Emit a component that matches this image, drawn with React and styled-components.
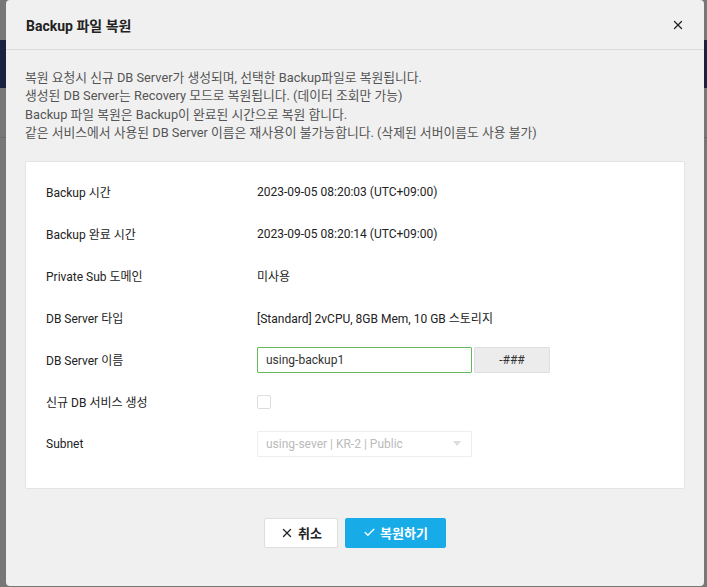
import styled, { createGlobalStyle } from 'styled-components';
import { X, Check } from 'lucide-react';

const GlobalStyle = createGlobalStyle`
  * { box-sizing: border-box; }
  html, body {
    margin: 0;
    padding: 0;
    height: 100%;
  }
  body {
    background: #777;
    font-family: Roboto, "Noto Sans CJK KR", sans-serif;
    color: #222;
    overflow: hidden;
  }
`;

const Backdrop = styled.div`
  position: relative;
  width: 100vw;
  height: 100vh;
  background: #777;
`;

const PageTop = styled.div`
  height: 40px;
`;

const PageNavBar = styled.div`
  height: 48px;
  background: #1b2140;
`;

const PageSubBar = styled.div`
  height: 50px;
  border-bottom: 1px solid #6a6a6a;
`;

const Modal = styled.div`
  position: absolute;
  top: 0;
  left: 6px;
  width: 698px;
  height: 586px;
  background: #f0f0f0;
  border-radius: 4px;
  display: flex;
  flex-direction: column;
`;

const Header = styled.div`
  height: 50px;
  display: flex;
  align-items: center;
  justify-content: space-between;
  padding: 0 19px 0 20px;
  border-bottom: 1px solid #dcdcdc;
`;

const Title = styled.h2`
  margin: 0;
  font-size: 14px;
  font-weight: 700;
  color: #222;
`;

const CloseButton = styled.button`
  border: none;
  background: none;
  padding: 0;
  display: flex;
  color: #222;
  cursor: pointer;
`;

const Body = styled.div`
  padding: 19px 19px 0;
`;

const Notice = styled.ul`
  list-style: none;
  margin: 0;
  padding: 0;
  font-size: 12.8px;
  line-height: 18.4px;
  color: #555;
`;

const Card = styled.div`
  margin-top: 18px;
  background: #fff;
  border: 1px solid #e4e4e4;
  border-radius: 2px;
  padding: 9px 20px 23px;
`;

const Row = styled.div`
  display: grid;
  grid-template-columns: 211px 1fr;
  align-items: center;
  height: 42px;
  font-size: 12px;
`;

const Label = styled.div`
  color: #222;
`;

const Value = styled.div`
  display: flex;
  align-items: center;
  gap: 2px;
  color: #222;
`;

const TextInput = styled.input`
  width: 215px;
  height: 26px;
  border: 1px solid #62bb5b;
  border-radius: 1px;
  padding: 0 8px;
  font: inherit;
  font-size: 12px;
  color: #333;
  outline: none;
`;

const Addon = styled.div`
  width: 76px;
  height: 26px;
  display: flex;
  align-items: center;
  justify-content: center;
  background: #ececec;
  border: 1px solid #dedede;
  border-radius: 1px;
  color: #333;
`;

const Checkbox = styled.span`
  display: inline-block;
  width: 14px;
  height: 14px;
  border: 1px solid #ddd;
  border-radius: 2px;
  background: #fff;
`;

const Select = styled.div`
  width: 215px;
  height: 26px;
  display: flex;
  align-items: center;
  justify-content: space-between;
  padding: 0 10px 0 8px;
  border: 1px solid #eee;
  border-radius: 1px;
  color: #bbb;
`;

const Caret = styled.span`
  width: 0;
  height: 0;
  border-left: 4px solid transparent;
  border-right: 4px solid transparent;
  border-top: 5px solid #ddd;
`;

const Footer = styled.div`
  display: flex;
  justify-content: center;
  gap: 7px;
  margin-top: 29px;
`;

const Button = styled.button`
  height: 30px;
  padding: 0 ${({ $primary }) => ($primary ? '16px' : '15px')};
  display: flex;
  align-items: center;
  gap: 4px;
  font-family: Roboto, "Noto Sans CJK KR", sans-serif;
  font-size: 13px;
  font-weight: 700;
  border-radius: 2px;
  cursor: pointer;
  border: 1px solid ${({ $primary }) => ($primary ? '#17abe8' : '#dedede')};
  background: ${({ $primary }) => ($primary ? '#17abe8' : '#fff')};
  color: ${({ $primary }) => ($primary ? '#fff' : '#222')};
  width: ${({ $primary }) => ($primary ? '101px' : '74px')};
  justify-content: center;
`;

const notices = [
  '복원 요청시 신규 DB Server가 생성되며, 선택한 Backup파일로 복원됩니다.',
  '생성된 DB Server는 Recovery 모드로 복원됩니다. (데이터 조회만 가능)',
  'Backup 파일 복원은 Backup이 완료된 시간으로 복원 합니다.',
  '같은 서비스에서 사용된 DB Server 이름은 재사용이 불가능합니다. (삭제된 서버이름도 사용 불가)',
];

const info = [
  ['Backup 시간', '2023-09-05 08:20:03 (UTC+09:00)'],
  ['Backup 완료 시간', '2023-09-05 08:20:14 (UTC+09:00)'],
  ['Private Sub 도메인', '미사용'],
  ['DB Server 타입', '[Standard] 2vCPU, 8GB Mem, 10 GB 스토리지'],
];

export default function App() {
  return (
    <>
      <GlobalStyle />
      <Backdrop>
        <PageTop />
        <PageNavBar />
        <PageSubBar />
        <Modal>
          <Header>
            <Title>Backup 파일 복원</Title>
            <CloseButton aria-label="close">
              <X size={14} strokeWidth={2.2} />
            </CloseButton>
          </Header>
          <Body>
            <Notice>
              {notices.map((n) => (
                <li key={n}>{n}</li>
              ))}
            </Notice>
            <Card>
              {info.map(([label, value]) => (
                <Row key={label}>
                  <Label>{label}</Label>
                  <Value>{value}</Value>
                </Row>
              ))}
              <Row>
                <Label>DB Server 이름</Label>
                <Value>
                  <TextInput defaultValue="using-backup1" />
                  <Addon>-###</Addon>
                </Value>
              </Row>
              <Row>
                <Label>신규 DB 서비스 생성</Label>
                <Value>
                  <Checkbox />
                </Value>
              </Row>
              <Row>
                <Label>Subnet</Label>
                <Value>
                  <Select>
                    using-sever | KR-2 | Public
                    <Caret />
                  </Select>
                </Value>
              </Row>
            </Card>
            <Footer>
              <Button>
                <X size={14} strokeWidth={2.2} />
                취소
              </Button>
              <Button $primary>
                <Check size={13} strokeWidth={2.4} />
                복원하기
              </Button>
            </Footer>
          </Body>
        </Modal>
      </Backdrop>
    </>
  );
}
